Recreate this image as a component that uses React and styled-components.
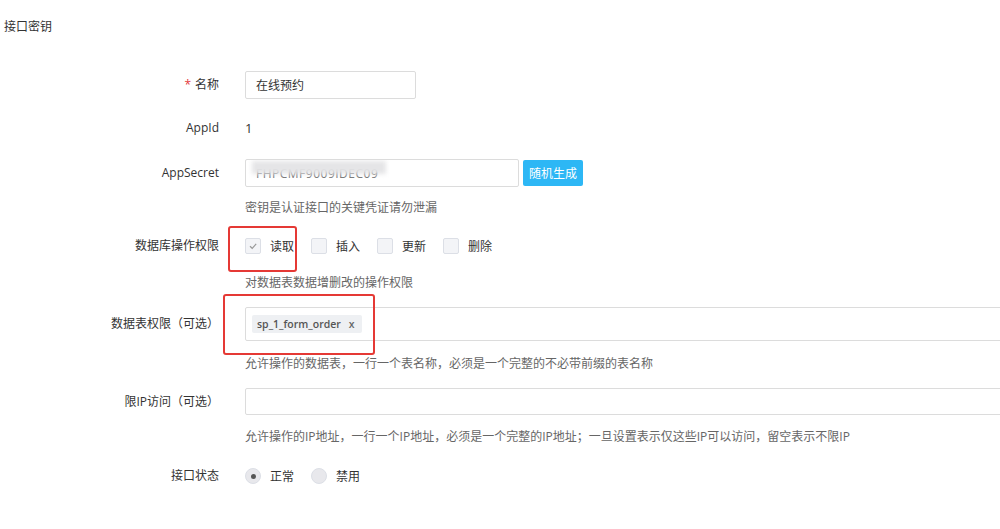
import React from 'react';
import styled, { createGlobalStyle } from 'styled-components';

const GlobalStyle = createGlobalStyle`
  html, body {
    margin: 0;
    padding: 0;
    background: #fff;
    overflow: hidden;
  }
  body {
    font-family: "Open Sans", "Noto Sans CJK SC", sans-serif;
    font-size: 12px;
    color: #333;
  }
`;

const Page = styled.div`
  position: relative;
  width: 1000px;
  height: 529px;
  overflow: hidden;
  padding: 17px 0 0 4px;
  box-sizing: border-box;
`;

const Title = styled.div`
  font-size: 12px;
  line-height: 20px;
  color: #333;
  margin-bottom: 34px;
`;

const Item = styled.div`
  display: grid;
  grid-template-columns: 215px 1fr;
  column-gap: 26px;
  margin-bottom: ${p => p.$mb ?? 15}px;
`;

const Label = styled.div`
  text-align: right;
  line-height: ${p => p.$h || 28}px;
  color: #333;
  white-space: nowrap;
`;

const Star = styled.span`
  color: #e4393c;
  margin-right: 4px;
`;

const Control = styled.div`
  display: flex;
  align-items: center;
  min-height: ${p => p.$h || 28}px;
  gap: 4px;
`;

const Input = styled.div`
  position: relative;
  box-sizing: border-box;
  width: ${p => p.$w}px;
  height: ${p => p.$h || 28}px;
  border: 1px solid #dcdcdc;
  border-radius: 2px;
  padding: 0 ${p => p.$px ?? 10}px;
  display: flex;
  align-items: center;
  color: #333;
  background: #fff;
  overflow: hidden;
`;

const Blurred = styled.span`
  position: relative;
  color: #777;
  letter-spacing: 0.5px;
  &::after {
    content: '';
    position: absolute;
    left: -4px;
    right: -8px;
    top: -4px;
    height: 13px;
    background: rgba(228, 228, 230, 0.96);
    filter: blur(2px);
  }
`;

const Button = styled.button`
  height: 26px;
  width: 60px;
  border: none;
  border-radius: 2px;
  background: #2db7f5;
  color: #fff;
  font-family: inherit;
  font-size: 12px;
  padding: 0;
`;

const Help = styled.div`
  grid-column: 2;
  margin-top: ${p => p.$mt || 11}px;
  line-height: 20px;
  color: #666;
`;

const Plain = styled.span`
  color: #333;
  font-size: 13px;
`;

const Option = styled.label`
  display: flex;
  align-items: center;
  margin-right: 13px;
  color: #333;
`;

const Box = styled.span`
  box-sizing: border-box;
  width: 16px;
  height: 16px;
  border: 1px solid #dcdfe6;
  border-radius: ${p => (p.$round ? '50%' : '2px')};
  background: ${p => (p.$round ? '#e8e8ec' : '#f3f4f7')};
  margin-right: 9px;
  display: flex;
  align-items: center;
  justify-content: center;
`;

const Dot = styled.span`
  width: 5px;
  height: 5px;
  border-radius: 50%;
  background: #555;
`;

const Tag = styled.span`
  display: inline-flex;
  align-items: center;
  height: 18px;
  padding: 0 7px 0 5px;
  background: #eef0f3;
  border-radius: 2px;
  font-weight: 600;
  color: #555;
  font-size: 10.5px;
`;

const TagClose = styled.span`
  margin-left: 8px;
  color: #666;
`;

const Mark = styled.div`
  position: absolute;
  box-sizing: border-box;
  border: 2px solid #e53935;
  border-radius: 3px;
  pointer-events: none;
`;

const Check = () => (
  <svg width="10" height="10" viewBox="0 0 10 10">
    <path d="M2 5.2 L4.2 7.3 L8.2 2.8" fill="none" stroke="#9a9a9a" strokeWidth="1.2" />
  </svg>
);

const perms = [
  { name: '读取', on: true },
  { name: '插入' },
  { name: '更新' },
  { name: '删除' },
];

export default function App() {
  return (
    <Page>
      <GlobalStyle />
      <Title>接口密钥</Title>

      <Item>
        <Label><Star>*</Star>名称</Label>
        <Control>
          <Input $w={171}>在线预约</Input>
        </Control>
      </Item>

      <Item $mb={17}>
        <Label>AppId</Label>
        <Control><Plain>1</Plain></Control>
      </Item>

      <Item $mb={14}>
        <Label>AppSecret</Label>
        <Control>
          <Input $w={274}><Blurred>FHPCMF9009IDEC09</Blurred></Input>
          <Button>随机生成</Button>
        </Control>
        <Help $mt={11}>密钥是认证接口的关键凭证请勿泄漏</Help>
      </Item>

      <Item $mb={14}>
        <Label>数据库操作权限</Label>
        <Control>
          {perms.map(p => (
            <Option key={p.name}>
              <Box>{p.on && <Check />}</Box>
              {p.name}
            </Option>
          ))}
        </Control>
        <Help $mt={13}>对数据表数据增删改的操作权限</Help>
      </Item>

      <Item $mb={14}>
        <Label $h={34}>数据表权限（可选）</Label>
        <Control $h={34}>
          <Input $w={800} $h={34} $px={6}>
            <Tag>sp_1_form_order<TagClose>x</TagClose></Tag>
          </Input>
        </Control>
        <Help $mt={13}>允许操作的数据表，一行一个表名称，必须是一个完整的不必带前缀的表名称</Help>
      </Item>

      <Item>
        <Label $h={27}>限IP访问（可选）</Label>
        <Control $h={27}>
          <Input $w={800} $h={27} />
        </Control>
        <Help $mt={12}>允许操作的IP地址，一行一个IP地址，必须是一个完整的IP地址；一旦设置表示仅这些IP可以访问，留空表示不限IP</Help>
      </Item>

      <Item>
        <Label>接口状态</Label>
        <Control>
          <Option>
            <Box $round><Dot /></Box>正常
          </Option>
          <Option>
            <Box $round />禁用
          </Option>
        </Control>
      </Item>

      <Mark style={{ left: 228, top: 226, width: 69, height: 46 }} />
      <Mark style={{ left: 223, top: 294, width: 152, height: 61 }} />
    </Page>
  );
}
